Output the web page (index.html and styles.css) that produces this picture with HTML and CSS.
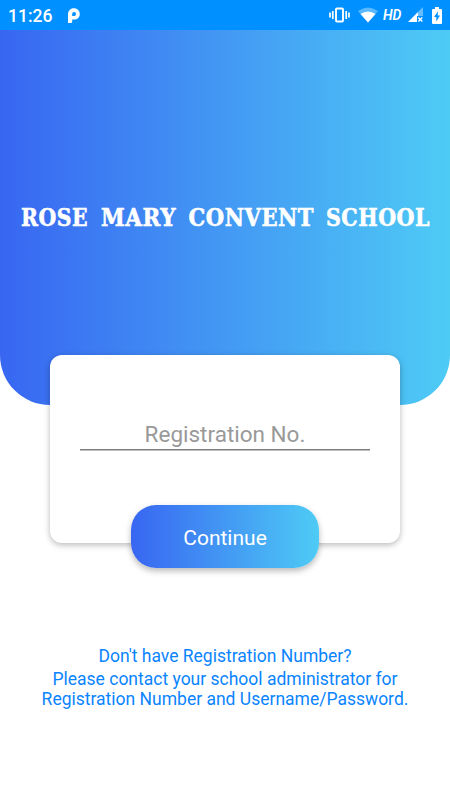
FILE: index.html
```html
<!DOCTYPE html>
<html lang="en">
<head>
<meta charset="utf-8">
<title>Rose Mary Convent School</title>
<link rel="stylesheet" href="styles.css">
</head>
<body>
<div class="statusbar">
  <span class="clock">11:26</span>
  <svg class="app-icon" width="14" height="16" viewBox="0 0 14 16"><path fill="#fff" fill-rule="evenodd" d="M1 15V6.500C1 2.800 3.400.2 6.800.2S12.800 2.500 12.800 5.900 10.400 11.600 7.100 11.600H5.200V13.500Q5.200 15 3.700 15ZM5.200 7.900H6.800A1.900 1.900 0 1 0 5.200 6.200Z"/></svg>
  <div class="system">
    <svg class="vibrate" width="21" height="16" viewBox="0 0 21 16" fill="none" stroke="#fff"><rect x="7" y="1.500" width="7" height="13" rx="1" stroke-width="1.900"/><path stroke-width="1.700" d="M3.800 4v8M17.200 4v8M1 5.500v5M20 5.500v5"/></svg>
    <svg class="wifi" width="20" height="16" viewBox="0 0 20 16"><path fill="#59b8ff" d="M0 4Q10-3 20 4L10 15.500Z"/><path fill="#fff" d="M2.500 7Q10 2 17.500 7L10 15.500Z"/></svg>
    <span class="hd">HD</span>
    <svg class="signal" width="16" height="16" viewBox="0 0 16 16"><path fill="#66bdff" d="M15 0V9H10V5Z"/><path fill="#fff" d="M0 15L10 5V15Z"/><path fill="#0090ff" d="M9 9h7v7H9z"/><path stroke="#fff" stroke-width="1.400" d="M10.300 10.500l4 4M14.300 10.500l-4 4"/></svg>
    <svg class="battery" width="10" height="17" viewBox="0 0 10 17"><path fill="#fff" d="M3 0h4v2h2q1 0 1 1v13q0 1-1 1H1q-1 0-1-1V3q0-1 1-1h2z"/><path fill="#0090ff" d="M6 4.300L2 10h2.300v4.500L8 8.500H5.700z"/></svg>
  </div>
</div>
<header class="hero">
  <svg class="school" width="450" height="40" viewBox="0 0 450 40" role="heading">
    <text x="21" y="28" textLength="67" lengthAdjust="spacingAndGlyphs">ROSE</text>
    <text x="101" y="28" textLength="75" lengthAdjust="spacingAndGlyphs">MARY</text>
    <text x="188.500" y="28" textLength="125.500" lengthAdjust="spacingAndGlyphs">CONVENT</text>
    <text x="326" y="28" textLength="104" lengthAdjust="spacingAndGlyphs">SCHOOL</text>
  </svg>
</header>
<main class="card">
  <input class="field" type="text" placeholder="Registration No." aria-label="Registration No.">
  <button class="continue" type="button">Continue</button>
</main>
<footer class="help">
  <p class="question">Don't have Registration Number?</p>
  <p class="answer">Please contact your school administrator for<br>Registration Number and Username/Password.</p>
</footer>
</body>
</html>
```
FILE: styles.css
```css
* { box-sizing: border-box; }
body {
  margin: 0;
  height: 800px;
  overflow: hidden;
  background: #fff;
  font-family: Roboto, sans-serif;
}
.statusbar {
  display: flex;
  align-items: center;
  height: 30px;
  padding: 0 8px;
  background: #0090ff;
  color: #fff;
}
.clock { font-size: 17.5px; font-weight: 500; width: 59px; line-height: 30px; padding-top: 1px; }
.app-icon { margin-top: 2px; }
.system { display: flex; align-items: center; margin-left: auto; }
.vibrate { margin-right: 8px; }
.wifi { margin-right: 5px; }
.hd {
  width: 25px;
  font-size: 15.5px;
  font-weight: 600;
  font-style: italic;
  line-height: 16px;
  transform: scaleX(.9);
  transform-origin: left;
}
.signal { margin-right: 8px; }
.hero {
  height: 375px;
  padding-top: 168px;
  border-radius: 0 0 50px 50px;
  background: linear-gradient(90deg, #3866f2, #4ecbf5);
}
.school {
  display: block;
  overflow: visible;
  fill: #fff;
  stroke: #fff;
  stroke-width: .6px;
  font: bold 23.5px "DejaVu Serif", serif;
  letter-spacing: .6px;
}
.card {
  position: relative;
  display: flex;
  flex-direction: column;
  align-items: center;
  width: 350px;
  height: 188px;
  margin: -50px auto 0;
  padding-top: 61px;
  border-radius: 12px;
  background: #fff;
  box-shadow: 0 2px 6px rgba(0, 0, 0, .28);
}
.field {
  flex: none;
  width: 290px;
  height: 34px;
  padding: 2px 0 0;
  border: 0;
  border-bottom: 1px solid #7c7c7c;
  box-shadow: 0 1px #c0c0c0;
  outline: 0;
  background: transparent;
  font: 22.5px Roboto, sans-serif;
  text-align: center;
}
.field::placeholder { color: #999; opacity: 1; }
.continue {
  flex: none;
  width: 188px;
  height: 63px;
  margin-top: 55px;
  padding: 2px 0 0;
  border: 0;
  border-radius: 25px;
  background: linear-gradient(90deg, #3866f2, #4ecbf5);
  box-shadow: 0 3px 6px rgba(0, 0, 0, .28);
  color: #fff;
  font: 21px Roboto, sans-serif;
}
.help {
  padding-top: 102px;
  color: #0a84ff;
  font-size: 17.5px;
  text-align: center;
}
.help p { margin: 0; line-height: 20px; }
.help .question { padding-top: 1px; }
.help .answer { margin-top: 3px; }
```
